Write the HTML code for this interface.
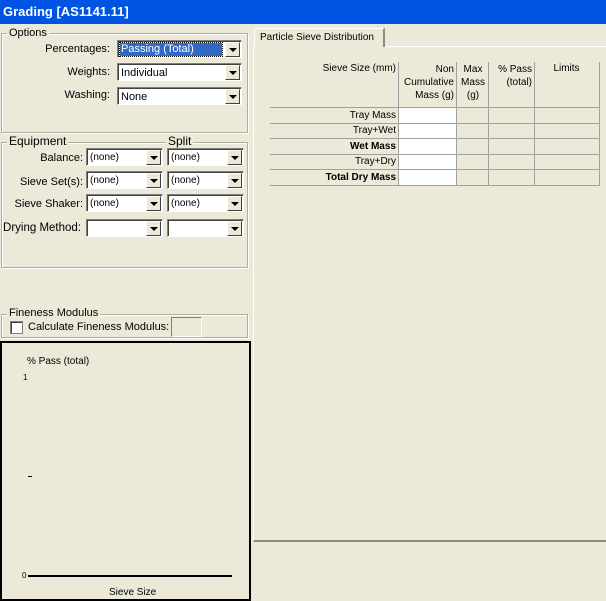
<!DOCTYPE html><html><head><style>
*{box-sizing:border-box;margin:0;padding:0}
body{width:606px;height:599px;background:#ece9d8;font-family:"Liberation Sans",sans-serif;font-size:11px;color:#000;position:relative;overflow:hidden}
.a{position:absolute;white-space:nowrap}
.title{left:0;top:0;width:606px;height:24px;background:#0054e3;color:#fff;font-weight:bold;font-size:13px;padding:4px 0 0 3px}
.grp{border:1px solid #b0ad9f;box-shadow:inset 1px 1px 0 #fff,1px 1px 0 #fff}
.lg{background:#ece9d8;padding:0 2px;line-height:11px}
.cb{background:#fff;border:1px solid #808080;border-right-color:#fff;border-bottom-color:#fff;box-shadow:inset 1px 1px 0 #404040;height:18px;font-size:10px;padding:2px 3px 0;line-height:14px;overflow:hidden}
.cb .btn{position:absolute;right:1px;top:1px;width:15px;height:15px;background:#ece9d8;border:1px solid;border-color:#fff #404040 #404040 #fff}
.cb .btn:after{content:"";position:absolute;left:3px;top:5px;border-left:4px solid transparent;border-right:4px solid transparent;border-top:4px solid #000}
.r{text-align:right}
.ln{background:#a0a0a0}
</style></head><body>
<div class="a title">Grading [AS1141.11]</div>

<div class="a grp" style="left:1px;top:33px;width:247px;height:100px"></div>
<div class="a lg" style="left:7px;top:28px">Options</div>
<div class="a r" style="left:20px;top:43px;width:90px">Percentages:</div>
<div class="a r" style="left:20px;top:66px;width:90px">Weights:</div>
<div class="a r" style="left:20px;top:89px;width:90px">Washing:</div>
<div class="a cb" style="left:117px;top:40px;width:125px;font-size:11px;padding-top:1px"><span style="background:#316ac5;color:#fff;outline:1px dotted #000;display:inline-block;width:102px;line-height:13px;margin-left:-1px;padding:0 1px">Passing (Total)</span><div class="btn"></div></div>
<div class="a cb" style="left:117px;top:63px;width:125px;font-size:11px">Individual<div class="btn"></div></div>
<div class="a cb" style="left:117px;top:87px;width:125px;font-size:11px">None<div class="btn"></div></div>

<div class="a grp" style="left:1px;top:142px;width:247px;height:126px"></div>
<div class="a lg" style="left:7px;top:136px;font-size:12px">Equipment</div>
<div class="a lg" style="left:166px;top:136px;font-size:12px">Split</div>
<div class="a r" style="left:5px;top:152px;width:78px">Balance:</div>
<div class="a r" style="left:5px;top:176px;width:78px">Sieve Set(s):</div>
<div class="a r" style="left:5px;top:198px;width:78px">Sieve Shaker:</div>
<div class="a r" style="left:3px;top:222px;width:78px;font-size:11.5px">Drying Method:</div>
<div class="a cb" style="left:86px;top:148px;width:77px">(none)<div class="btn"></div></div>
<div class="a cb" style="left:167px;top:148px;width:77px">(none)<div class="btn"></div></div>
<div class="a cb" style="left:86px;top:171px;width:77px">(none)<div class="btn"></div></div>
<div class="a cb" style="left:167px;top:171px;width:77px">(none)<div class="btn"></div></div>
<div class="a cb" style="left:86px;top:194px;width:77px">(none)<div class="btn"></div></div>
<div class="a cb" style="left:167px;top:194px;width:77px">(none)<div class="btn"></div></div>
<div class="a cb" style="left:86px;top:219px;width:77px"><div class="btn"></div></div>
<div class="a cb" style="left:167px;top:219px;width:77px"><div class="btn"></div></div>

<div class="a grp" style="left:1px;top:314px;width:247px;height:24px"></div>
<div class="a lg" style="left:7px;top:308px">Fineness Modulus</div>
<div class="a" style="left:10px;top:321px;width:13px;height:13px;background:#fff;border:1px solid #808080;box-shadow:inset 1px 1px 0 #404040"></div>
<div class="a" style="left:28px;top:321px">Calculate Fineness Modulus:</div>
<div class="a" style="left:171px;top:317px;width:31px;height:20px;border:1px solid #808080;border-right-color:#fff;border-bottom-color:#fff"></div>

<div class="a" style="left:0;top:341px;width:251px;height:260px;border:2px solid #000"></div>
<div class="a" style="left:27px;top:356px;font-size:10px">% Pass (total)</div>
<div class="a" style="left:23px;top:373px;font-size:8px">1</div>
<div class="a" style="left:28px;top:476px;width:4px;height:1px;background:#000"></div>
<div class="a" style="left:22px;top:571px;font-size:8px">0</div>
<div class="a" style="left:28px;top:575px;width:204px;height:2px;background:#000"></div>
<div class="a" style="left:109px;top:587px;font-size:10px">Sieve Size</div>

<div class="a" style="left:253px;top:46px;width:353px;height:496px;border-left:1px solid #fff;border-top:1px solid #fff;border-bottom:2px solid #8d8b80"></div>
<div class="a" style="left:254px;top:28px;width:131px;height:19px;background:#ece9d8;border:1px solid #fff;border-right:2px solid #8d8b80;border-bottom:none;padding:3px 0 0 5px;font-size:10px">Particle Sieve Distribution</div>

<div class="a r" style="left:270px;top:63px;width:126px;font-size:10px">Sieve Size (mm)</div>
<div class="a r" style="left:398px;top:63px;width:56px;font-size:10px;line-height:13px">Non<br>Cumulative<br>Mass (g)</div>
<div class="a" style="left:458px;top:63px;width:30px;font-size:10px;line-height:13px;text-align:center">Max<br>Mass<br>(g)</div>
<div class="a r" style="left:488px;top:63px;width:44px;font-size:10px;line-height:13px">% Pass<br>(total)</div>
<div class="a" style="left:534px;top:63px;width:65px;font-size:10px;text-align:center">Limits</div>
<div class="a" style="left:399px;top:108px;width:57px;height:78px;background:#fff"></div>
<div class="a ln" style="left:398px;top:62px;width:1px;height:124px"></div>
<div class="a ln" style="left:456px;top:62px;width:1px;height:124px"></div>
<div class="a ln" style="left:488px;top:62px;width:1px;height:124px"></div>
<div class="a ln" style="left:534px;top:62px;width:1px;height:124px"></div>
<div class="a ln" style="left:599px;top:62px;width:1px;height:124px"></div>
<div class="a ln" style="left:270px;top:107px;width:330px;height:1px"></div>
<div class="a ln" style="left:270px;top:123px;width:330px;height:1px"></div>
<div class="a ln" style="left:270px;top:138px;width:330px;height:1px"></div>
<div class="a ln" style="left:270px;top:154px;width:330px;height:1px"></div>
<div class="a ln" style="left:270px;top:169px;width:330px;height:1px"></div>
<div class="a ln" style="left:270px;top:185px;width:330px;height:1px"></div>
<div class="a r" style="left:270px;top:110px;width:126px;font-size:10px">Tray Mass</div>
<div class="a r" style="left:270px;top:125px;width:126px;font-size:10px">Tray+Wet</div>
<div class="a r" style="left:270px;top:141px;width:126px;font-size:10px;font-weight:bold">Wet Mass</div>
<div class="a r" style="left:270px;top:156px;width:126px;font-size:10px">Tray+Dry</div>
<div class="a r" style="left:270px;top:172px;width:126px;font-size:10px;font-weight:bold">Total Dry Mass</div>
</body></html>
